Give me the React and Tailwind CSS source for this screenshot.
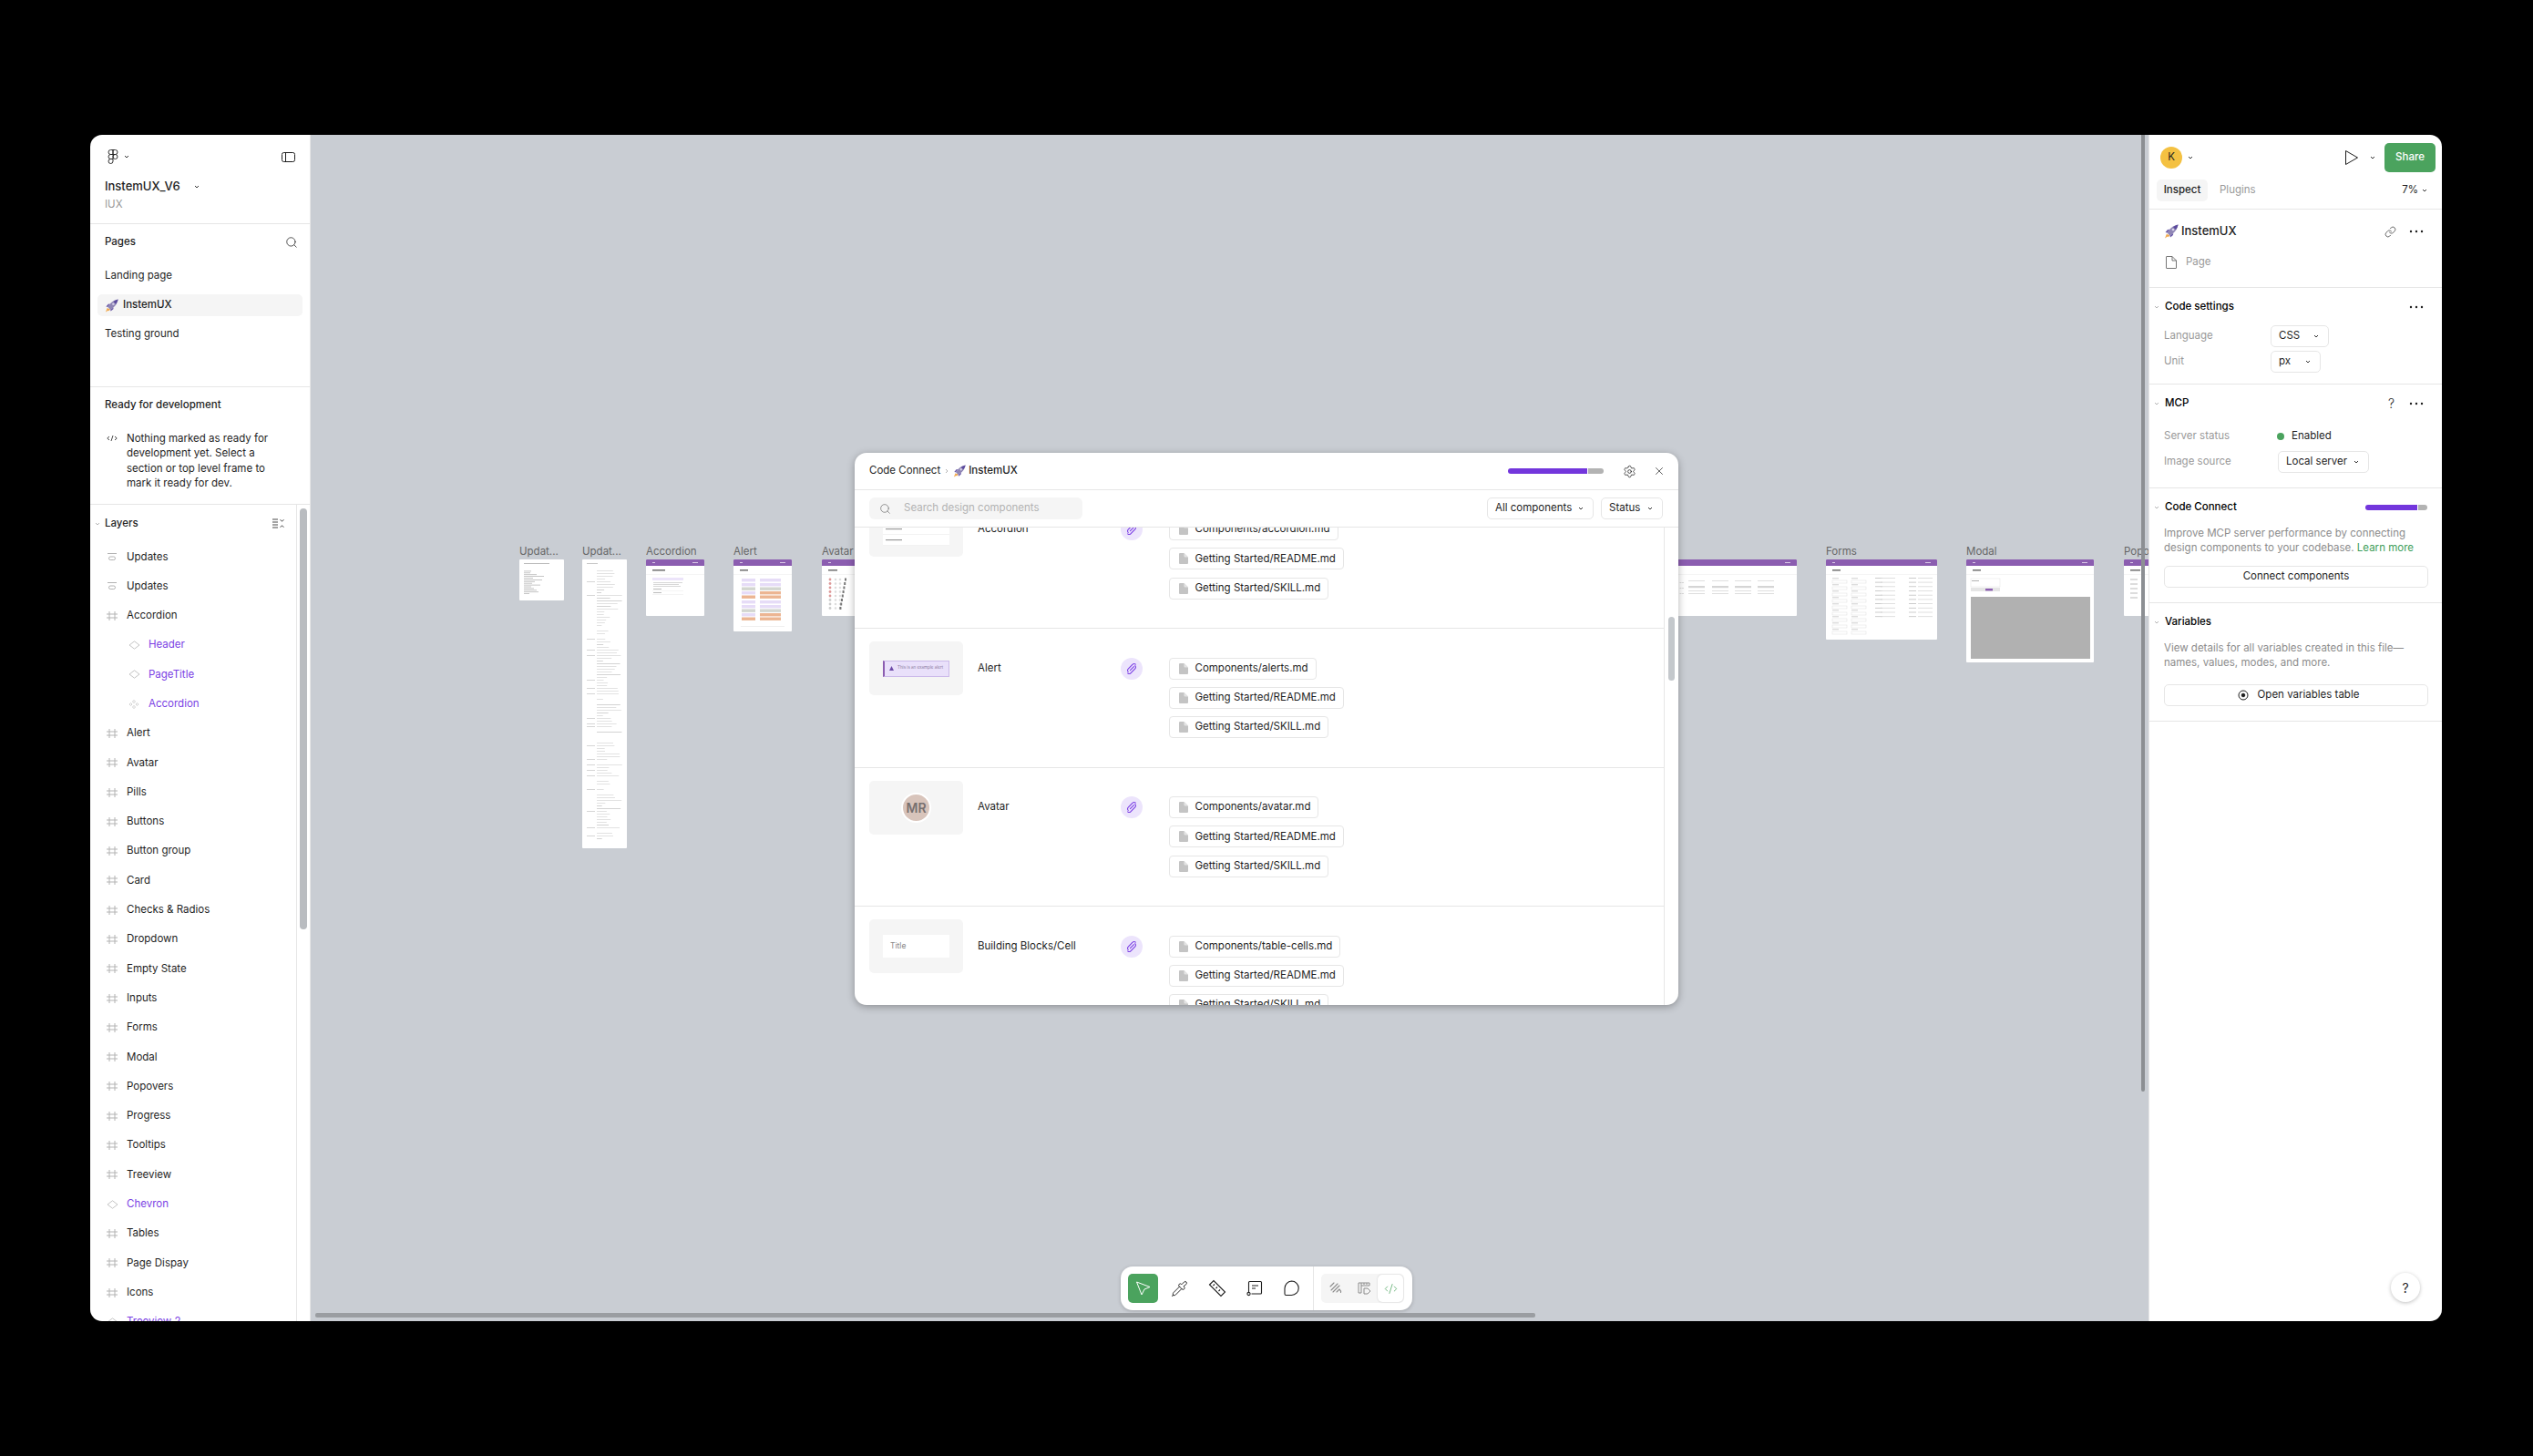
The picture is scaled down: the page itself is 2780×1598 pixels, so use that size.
import { CodeXml, Link, Pipette, Search, Settings, X } from 'lucide-react'

const Chev = ({ className = 'text-[#333]' }) => (
  <svg width="8" height="8" viewBox="0 0 8 8" fill="none" className={`shrink-0 ${className}`}>
    <path d="M2 3l2 2 2-2" stroke="currentColor" strokeWidth="1" />
  </svg>
)

const Dots = () => (
  <svg width="16" height="4" viewBox="0 0 16 4" className="mr-[4px] shrink-0 text-[#1e1e1e]">
    <circle cx="2" cy="2" r="1.2" fill="currentColor" />
    <circle cx="8" cy="2" r="1.2" fill="currentColor" />
    <circle cx="14" cy="2" r="1.2" fill="currentColor" />
  </svg>
)

const Rocket = ({ size = 15 }) => (
  <svg width={size} height={size} viewBox="0 0 16 16" className="shrink-0">
    <path d="M1 15.5l2-5 1.5 1.2L7 10.8l-2 3.4-1-.6z" fill="#f0a94e" />
    <path d="M3.5 9.5C6 5 10 1.5 15.5.5 14.8 6 11 10 6.5 12.5z" fill="#8f86b5" />
    <path d="M10 3.2C12 1.8 13.8 1 15.5.5 15.2 2.3 14.4 4 13 6z" fill="#5b4a9e" />
    <circle cx="10" cy="6" r="1.3" fill="#d9d5ea" />
    <path d="M3.5 9.5L1.5 9l2.5-3 2-.2zM6.5 12.5L7 14.5l3-2.5.2-2z" fill="#6a5aa8" />
  </svg>
)

const FigmaLogo = () => (
  <svg width="12" height="16" viewBox="0 0 12 16" fill="none" stroke="#1e1e1e" strokeWidth="0.9">
    <path d="M6 .5H3.5a2.5 2.5 0 0 0 0 5H6z" />
    <path d="M6 .5h2.5a2.5 2.5 0 0 1 0 5H6z" />
    <path d="M6 5.5H3.5a2.5 2.5 0 0 0 0 5H6z" />
    <circle cx="8.5" cy="8" r="2.5" />
    <path d="M3.5 10.5H6V13a2.5 2.5 0 1 1-2.5-2.5z" />
  </svg>
)

const LayerIcon = ({ kind }) => {
  if (kind === 'section') {
    return (
      <svg width="12" height="10" viewBox="0 0 12 10" fill="none" stroke="#b3b3b3">
        <path d="M1 1.5h10" />
        <rect x="2.5" y="5" width="7" height="3.5" rx="1.7" />
      </svg>
    )
  }
  if (kind === 'frame') {
    return (
      <svg width="12" height="10" viewBox="0 0 12 10" fill="none" stroke="#b3b3b3">
        <path d="M0 3h12M0 7h12M3 0v10M9 0v10" />
      </svg>
    )
  }
  if (kind === 'set') {
    return (
      <svg width="12" height="10" viewBox="0 0 12 10" fill="none" stroke="#c4c4c4" strokeWidth="0.8">
        <path d="M6 .5L7.6 2 6 3.5 4.4 2zM6 6.5L7.6 8 6 9.5 4.4 8zM2.5 3.5L4 5 2.5 6.5 1 5zM9.5 3.5L11 5 9.5 6.5 8 5z" />
      </svg>
    )
  }
  return (
    <svg width="13" height="10" viewBox="0 0 13 10" fill="none" stroke="#bdbdbd" strokeWidth="0.9">
      <path d="M6.5 .8L12 5 6.5 9.2 1 5z" />
    </svg>
  )
}

const layers = [
  ['Updates', 'section'],
  ['Updates', 'section'],
  ['Accordion', 'frame'],
  ['Header', 'comp', true],
  ['PageTitle', 'comp', true],
  ['Accordion', 'set', true],
  ['Alert', 'frame'],
  ['Avatar', 'frame'],
  ['Pills', 'frame'],
  ['Buttons', 'frame'],
  ['Button group', 'frame'],
  ['Card', 'frame'],
  ['Checks & Radios', 'frame'],
  ['Dropdown', 'frame'],
  ['Empty State', 'frame'],
  ['Inputs', 'frame'],
  ['Forms', 'frame'],
  ['Modal', 'frame'],
  ['Popovers', 'frame'],
  ['Progress', 'frame'],
  ['Tooltips', 'frame'],
  ['Treeview', 'frame'],
  ['Chevron', 'comp', false, true],
  ['Tables', 'frame'],
  ['Page Dispay', 'frame'],
  ['Icons', 'frame'],
  ['Treeview 2', 'comp', false, true],
]

const LeftPanel = () => (
  <aside className="flex w-[242px] shrink-0 flex-col border-r border-[#e6e6e6] bg-white">
    {/* File header */}
    <div className="h-[98px] shrink-0 border-b border-[#e6e6e6] pl-[16px] pr-[16px] pt-[12px]">
      <div className="flex h-[24px] items-center justify-between">
        <div className="flex items-center gap-[5px] pl-[3px]">
          <FigmaLogo />
          <Chev />
        </div>
        <svg width="15" height="11" viewBox="0 0 15 11" fill="none" stroke="#1e1e1e">
          <rect x="0.5" y="0.5" width="14" height="10" rx="2" />
          <path d="M4.5 .5v10" />
        </svg>
      </div>
      <div className="mt-[11px] flex h-[20px] items-center gap-[14px]">
        <span className="text-[13px] font-medium text-[#1e1e1e]">InstemUX_V6</span>
        <Chev />
      </div>
      <div className="flex h-[20px] items-center text-[11.5px] text-[#999]">IUX</div>
    </div>

    {/* Pages */}
    <div className="h-[179px] shrink-0 border-b border-[#e6e6e6]">
      <div className="flex h-[40px] items-center justify-between pl-[16px] pr-[13px]">
        <span className="text-[11.5px] font-medium text-[#1e1e1e]">Pages</span>
        <Search size={14} strokeWidth={1.3} className="text-[#1e1e1e]" />
      </div>
      <div className="mt-[5px] flex flex-col gap-[8px] px-[8px]">
        <div className="flex h-[24px] items-center pl-[8px] text-[11.5px] text-[#1e1e1e]">Landing page</div>
        <div className="flex h-[24px] items-center gap-[5px] rounded-[5px] bg-[#f5f5f5] pl-[8px] text-[11.5px] font-medium text-[#1e1e1e]">
          <Rocket />
          InstemUX
        </div>
        <div className="flex h-[24px] items-center pl-[8px] text-[11.5px] text-[#1e1e1e]">Testing ground</div>
      </div>
    </div>

    {/* Ready for development */}
    <div className="h-[129px] shrink-0 border-b border-[#e6e6e6]">
      <div className="flex h-[40px] items-center pl-[16px] text-[11.5px] font-medium text-[#1e1e1e]">Ready for development</div>
      <div className="mt-[8px] flex pl-[18px]">
        <svg width="12" height="16" viewBox="0 0 12 16" fill="none" stroke="#333" strokeWidth="0.9" className="shrink-0">
          <path d="M3 6L.8 8 3 10M9 6l2.2 2L9 10M7 5L5 11" />
        </svg>
        <p className="ml-[10px] w-[180px] text-[11.5px] leading-[16.3px] text-[#1e1e1e]">
          Nothing marked as ready for development yet. Select a section or top level frame to mark it ready for dev.
        </p>
      </div>
    </div>

    {/* Layers */}
    <div className="flex min-h-0 flex-1">
      <div className="min-w-0 flex-1 overflow-hidden">
        <div className="flex h-[41px] items-center pl-[4px] pr-[13px]">
          <Chev className="text-[#b3b3b3]" />
          <span className="ml-[4px] flex-1 text-[11.5px] font-medium text-[#1e1e1e]">Layers</span>
          <svg width="13" height="11" viewBox="0 0 13 11" fill="none" stroke="#333" strokeWidth="0.9">
            <path d="M0 1h6M0 4h6M0 7h6M0 10h6M8.5 1.5L10.5 3l2-1.5M8.5 9.5L10.5 8l2 1.5" />
          </svg>
        </div>
        {layers.map(([name, kind, child, purple], i) => (
          <div key={i} className="flex h-[32.3px] items-center text-[11.5px]">
            <div className={child ? 'flex w-[56px] justify-end' : 'flex w-[32px] justify-end'}>
              <div className="flex w-[16px] justify-center">
                <LayerIcon kind={kind} />
              </div>
            </div>
            <span className={child || purple ? 'ml-[8px] text-[#7b3fe4]' : 'ml-[8px] text-[#1e1e1e]'}>{name}</span>
          </div>
        ))}
      </div>
      <div className="w-[15px] shrink-0 border-l border-[#e6e6e6] pl-[3px] pt-[4px]">
        <div className="h-[462px] w-[8px] rounded-[4px] bg-[#b9bcc0]" />
      </div>
    </div>
  </aside>
)

const hash = (n) => {
  const v = Math.sin(n * 12.9898) * 43758.5453
  return v - Math.floor(v)
}

// tiny text of the long changelog frame, seen zoomed out
const ChangelogArt = () => {
  const lines = []
  for (let i = 0; i < 100; i++) {
    const y = 12 + i * 3
    const r = hash(i + 3)
    if (r < 0.14) continue
    if (r < 0.3) lines.push(<rect key={`a${i}`} x="5" y={y} width="9" height="0.7" fill="#c4c4c4" />)
    lines.push(<rect key={`b${i}`} x="16" y={y} width={5 + 23 * hash(i * 3 + 3)} height="0.7" fill={r > 0.8 ? '#c0c0c0' : '#d6d6d6'} />)
  }
  return (
    <svg width="49" height="317" viewBox="0 0 49 317" className="block">
      <rect x="5" y="4" width="12" height="0.8" fill="#bbb" />
      {lines}
    </svg>
  )
}

const UpdatesArt = () => (
  <svg width="49" height="45" viewBox="0 0 49 45" className="block">
    <rect x="5" y="4" width="28" height="0.8" fill="#aaa" />
    {[8, 7, 14, 22, 10, 20, 12, 9, 18, 8, 11, 14, 16, 6].map((w, i) => (
      <rect key={i} x="5" y={12.500 + i * 1.9} width={w} height="0.8" fill="#b8b8b8" />
    ))}
  </svg>
)

const AlertArt = () => {
  const cols = [
    [9, 15, ['#e6dcf7', '#e6dcf7', '#d3d6d0', '#e6dcf7', '#ecb592']],
    [29, 23, ['#e6dcf7', '#e6dcf7', '#d3d6d0', '#ecb592', '#ecb592']],
  ]
  const ys = [20, 25, 29.5, 34, 38.5, 44, 49, 53.5, 58, 62.5]
  return (
    <svg width="64" height="73" viewBox="0 0 64 73" className="block">
      <rect x="7" y="4" width="9" height="1.6" fill="#777" />
      <rect x="0" y="9" width="64" height="0.6" fill="#eee" />
      {cols.map(([x, w, c], ci) =>
        ys.map((y, i) => <rect key={`${ci}-${i}`} x={x} y={y - 6} width={w} height={3.4} fill={c[i % 5]} />)
      )}
      <rect x="8" y="66" width="48" height="0.6" fill="#e4e4e4" />
    </svg>
  )
}

const AccordionArt = () => (
  <svg width="64" height="56" viewBox="0 0 64 56" className="block">
    <rect x="7" y="4" width="14" height="1.6" fill="#777" />
    <rect x="0" y="9" width="64" height="0.6" fill="#eee" />
    <rect x="7" y="13" width="34" height="3" fill="#ece4fa" />
    <rect x="8" y="18" width="32" height="0.8" fill="#cfcfcf" />
    <rect x="8" y="20" width="28" height="0.8" fill="#cfcfcf" />
    <rect x="8" y="22" width="30" height="0.8" fill="#cfcfcf" />
    <rect x="8" y="25" width="9" height="0.8" fill="#aaa" />
    <rect x="8" y="29" width="9" height="0.8" fill="#aaa" />
    <rect x="7" y="27" width="34" height="0.5" fill="#e8e8e8" />
    <rect x="7" y="31" width="34" height="0.5" fill="#e8e8e8" />
  </svg>
)

const AvatarArt = () => (
  <svg width="64" height="56" viewBox="0 0 64 56" className="block">
    <rect x="7" y="4" width="10" height="1.6" fill="#777" />
    <rect x="0" y="9" width="64" height="0.6" fill="#eee" />
    {[0, 1, 2, 3, 4, 5, 6, 7].map((i) => (
      <g key={i}>
        <circle cx="9" cy={15 + i * 4.5} r="1.4" fill={i < 5 ? '#d99' : '#ccc'} />
        <circle cx="15" cy={15 + i * 4.5} r="1.3" fill="#ddd" />
        <circle cx="20" cy={15 + i * 4.5} r="1.3" fill="#ddd" />
        <rect x={25 - i * 0.8} y={13.5 + i * 4.5} width="2" height="3" fill="#777" />
      </g>
    ))}
  </svg>
)

const InputsArt = () => (
  <svg width="231" height="56" viewBox="0 0 231 56" className="block">
    <rect x="0" y="9" width="231" height="0.6" fill="#eee" />
    {[102.500, 105].map((x) =>
      [18, 24, 30].map((y) => <rect key={`${x}-${y}`} x={x} y={y} width="2" height="1" fill="#ddd" />)
    )}
    {[112, 138, 163, 188].map((x) =>
      [16, 22, 27, 30].map((y, i) => (
        <rect key={`${x}-${i}`} x={x} y={y} width="18" height={i === 1 ? 2.2 : 0.7} fill={i === 1 ? '#d5d5d5' : '#d0d0d0'} />
      ))
    )}
  </svg>
)

const FormsArt = () => {
  const rows = []
  for (let i = 0; i < 9; i++) {
    ;[7, 28].forEach((x) => {
      rows.push(<rect key={`l${x}${i}`} x={x} y={16 + i * 7} width="16" height="3" fill="none" stroke="#ddd" strokeWidth="0.5" />)
      rows.push(<rect key={`m${x}${i}`} x={x} y={13.5 + i * 7} width="7" height="0.7" fill="#bbb" />)
    })
  }
  for (let i = 0; i < 10; i++) {
    ;[54, 60, 88, 98].forEach((x, j) => {
      rows.push(<rect key={`r${j}${i}`} x={x + (j > 1 ? 3 : 0)} y={13 + i * 4.7} width={j % 2 ? 16 : 8} height="0.8" fill={j % 2 ? '#d8d8d8' : '#c0c0c0'} />)
    })
  }
  return (
    <svg width="122" height="82" viewBox="0 0 122 82" className="block">
      <rect x="7" y="4" width="9" height="1.6" fill="#777" />
      <rect x="0" y="9" width="122" height="0.6" fill="#eee" />
      {rows}
    </svg>
  )
}

const ModalArt = () => (
  <svg width="140" height="107" viewBox="0 0 140 107" className="block">
    <rect x="7" y="4" width="9" height="1.6" fill="#777" />
    <rect x="0" y="9" width="140" height="0.6" fill="#eee" />
    <rect x="5" y="14" width="32" height="9" fill="none" stroke="#e2e2e2" strokeWidth="0.5" />
    <rect x="6" y="16" width="8" height="0.9" fill="#aaa" />
    <rect x="5" y="24" width="32" height="4" fill="#e5e5e5" />
    <rect x="21" y="25" width="8" height="2.4" fill="#8b5db0" />
    <rect x="5" y="34" width="131" height="68" fill="#b1b1b1" />
  </svg>
)

const PopoverArt = () => (
  <svg width="64" height="56" viewBox="0 0 64 56" className="block">
    <rect x="7" y="4" width="11" height="1.6" fill="#777" />
    <rect x="0" y="9" width="64" height="0.6" fill="#eee" />
    {[0, 1, 2, 3, 4].map((i) => (
      <rect key={i} x="7" y={14 + i * 5} width="8" height="2" fill="#ddd" />
    ))}
  </svg>
)

const Frame = ({ label, className, top, children }) => (
  <div className={`absolute top-[466px] ${className}`}>
    <div className="absolute -top-[16px] left-0 whitespace-nowrap text-[11.5px] leading-[14px] text-[#666]">{label}</div>
    <div className="h-full w-full overflow-hidden rounded-[1px] bg-white">
      {top && (
        <div className="flex h-[6.5px] items-center justify-between bg-[#8b5db0] px-[7px]">
          <div className="h-[1.5px] w-[3px] bg-[#d9c8e6]" />
          <div className="h-[1px] w-[6px] bg-[#d9c8e6]" />
        </div>
      )}
      {children}
    </div>
  </div>
)

const ClipIcon = ({ size = 16 }) => (
  <svg width={size} height={size} viewBox="0 0 16 16" fill="none" stroke="#7b3fe4" strokeWidth="1.1" strokeLinecap="round">
    <path d="M12.3 3.2a2.2 2.2 0 0 0-3.2 0L4.2 8.1a2.2 2.2 0 0 0 0 3.2" />
    <path d="M3.7 12.8a2.2 2.2 0 0 0 3.2 0l4.9-4.9a2.2 2.2 0 0 0 0-3.2" />
    <path d="M10.4 5.7L6.4 9.6" />
  </svg>
)

const DocIcon = () => (
  <svg width="10" height="12" viewBox="0 0 10 12" className="shrink-0">
    <path d="M0 1a1 1 0 0 1 1-1h4.5L10 4.5V11a1 1 0 0 1-1 1H1a1 1 0 0 1-1-1z" fill="#c4c4c4" />
    <path d="M5.5 0L10 4.5H6.5a1 1 0 0 1-1-1z" fill="#e4e4e4" />
  </svg>
)

const Chip = ({ children }) => (
  <div className="flex h-[24px] w-fit items-center gap-[7.5px] rounded-[4px] border border-[#e6e6e6] bg-white pl-[10px] pr-[8px] text-[11.5px] text-[#1e1e1e]">
    <DocIcon />
    {children}
  </div>
)

const ThumbAccordion = () => (
  <div className="flex h-full items-end justify-center pb-[12px]">
    <svg width="73" height="40" viewBox="0 0 73 40">
      <rect x="0" y="0" width="73" height="40" fill="#fff" />
      <rect x="2" y="14" width="69" height="0.5" fill="#e4e4e4" />
      <rect x="2" y="4" width="50" height="1" fill="#ccc" />
      <rect x="2" y="8" width="40" height="1" fill="#ccc" />
      <rect x="3" y="21" width="18" height="1.2" fill="#999" />
      <rect x="3" y="33" width="18" height="1.2" fill="#999" />
      <rect x="0" y="27" width="73" height="0.5" fill="#e4e4e4" />
      <rect x="0" y="39" width="73" height="0.5" fill="#e4e4e4" />
    </svg>
  </div>
)

const ThumbAlert = () => (
  <div className="flex h-full items-center justify-center">
    <div className="flex h-[18px] w-[73px] items-center gap-[4px] border border-l-2 border-[#cbb9ea] border-l-[#8b5db0] bg-[#e9e0fa] pl-[5px]">
      <svg width="5" height="5" viewBox="0 0 5 5">
        <path d="M2.5 0L5 5H0z" fill="#6d4aa8" />
      </svg>
      <div className="whitespace-nowrap text-[4.5px] leading-none text-[#8a7a9e]">This is an example alert</div>
    </div>
  </div>
)

const ThumbAvatar = () => (
  <div className="flex h-full items-center justify-center">
    <div className="flex h-[33px] w-[33px] items-center justify-center rounded-full border-2 border-white bg-[#d8c4bb] text-[14px] font-semibold text-[#787070]">
      MR
    </div>
  </div>
)

const ThumbCell = () => (
  <div className="flex h-full items-center justify-center">
    <div className="flex h-[25px] w-[73px] items-center bg-white pl-[8px] text-[8.5px] text-[#888]">Title</div>
  </div>
)

const rows = [
  { name: 'Accordion', thumb: <ThumbAccordion />, first: 'Components/accordion.md' },
  { name: 'Alert', thumb: <ThumbAlert />, first: 'Components/alerts.md' },
  { name: 'Avatar', thumb: <ThumbAvatar />, first: 'Components/avatar.md' },
  { name: 'Building Blocks/Cell', thumb: <ThumbCell />, first: 'Components/table-cells.md' },
]

const ConnectModal = () => (
  <div className="absolute left-[597px] top-[349px] flex h-[606px] w-[904px] flex-col overflow-hidden rounded-[13px] bg-white shadow-[0_2px_8px_rgba(0,0,0,0.3)]">
    <div className="flex h-[41px] shrink-0 items-center border-b border-[#e6e6e6] pl-[16px] pr-[14px]">
      <span className="text-[11.5px] text-[#1e1e1e]">Code Connect</span>
      <svg width="8" height="8" viewBox="0 0 8 8" fill="none" stroke="#b3b3b3" className="mx-[3px]">
        <path d="M3 2l2 2-2 2" />
      </svg>
      <Rocket size={14} />
      <span className="ml-[3px] text-[11.5px] font-medium text-[#1e1e1e]">InstemUX</span>
      <div className="ml-auto flex h-[6px] w-[105px] gap-[1px]">
        <div className="w-[87px] rounded-l-[3px] bg-[#7336dc]" />
        <div className="flex-1 rounded-r-[3px] bg-[#b3b3b3]" />
      </div>
      <Settings size={15} strokeWidth={1.2} className="ml-[21px] text-[#1e1e1e]" />
      <X size={14} strokeWidth={1.2} className="ml-[18px] text-[#1e1e1e]" />
    </div>
    <div className="flex h-[41px] shrink-0 items-center border-b border-[#e6e6e6] pl-[16px] pr-[17px]">
      <div className="flex h-[24px] w-[234px] items-center rounded-[6px] bg-[#f5f5f5] pl-[11px] text-[11.5px] text-[#b3b3b3]">
        <Search size={13} strokeWidth={1.2} className="text-[#666]" />
        <span className="ml-[14px]">Search design components</span>
      </div>
      <div className="ml-auto flex h-[24px] w-[117px] items-center justify-between rounded-[5px] border border-[#e6e6e6] pl-[8px] pr-[9px] text-[11.5px] text-[#1e1e1e]">
        All components
        <Chev />
      </div>
      <div className="ml-[8px] flex h-[24px] w-[68px] items-center justify-between rounded-[5px] border border-[#e6e6e6] pl-[8px] pr-[9px] text-[11.5px] text-[#1e1e1e]">
        Status
        <Chev />
      </div>
    </div>
    <div className="flex min-h-0 flex-1">
      <div className="min-w-0 flex-1 overflow-hidden">
        <div className="-mt-[41.5px]">
          {rows.map((row) => (
            <div key={row.name} className="flex h-[152.5px] border-b border-[#e6e6e6] pl-[16px] pt-[14px]">
              <div className="h-[59px] w-[103px] shrink-0 rounded-[5px] bg-[#f5f5f5]">{row.thumb}</div>
              <div className="ml-[16px] flex h-[59px] w-[157px] shrink-0 items-center text-[11.5px] text-[#1e1e1e]">{row.name}</div>
              <div className="flex h-[59px] w-[24px] shrink-0 items-center">
                <div className="flex h-[24px] w-[24px] items-center justify-center rounded-full bg-[#ece4fc]">
                  <ClipIcon />
                </div>
              </div>
              <div className="ml-[29px] flex flex-col gap-[8.3px] pt-[17.5px]">
                <Chip>{row.first}</Chip>
                <Chip>Getting Started/README.md</Chip>
                <Chip>Getting Started/SKILL.md</Chip>
              </div>
            </div>
          ))}
        </div>
      </div>
      <div className="w-[16px] shrink-0 border-l border-[#e6e6e6] pl-[4px] pt-[98px]">
        <div className="h-[70px] w-[7px] rounded-[4px] bg-[#c4c8cc]" />
      </div>
    </div>
  </div>
)

const Toolbar = () => (
  <div className="absolute left-[889px] top-[1242px] flex h-[48px] w-[320px] items-center rounded-[13px] bg-white pl-[8px] shadow-[0_1px_4px_rgba(0,0,0,0.2)]">
    <div className="flex h-[32px] w-[33px] items-center justify-center rounded-[5px] bg-[#4ba35e]">
      <svg width="20" height="20" viewBox="0 0 20 20" fill="none" stroke="#fff" strokeWidth="1" strokeLinejoin="round">
        <path d="M2.5 3L17 8.5l-6 2.5-3 6z" />
      </svg>
    </div>
    <div className="ml-[3px] flex w-[41px] justify-center">
      <Pipette size={19} strokeWidth={1.2} className="text-[#1e1e1e]" />
    </div>
    <div className="flex w-[41px] justify-center">
      <svg width="20" height="20" viewBox="0 0 20 20" fill="none" stroke="#1e1e1e" strokeWidth="1.1">
        <path d="M1.5 6L6 1.5 18.5 14 14 18.5zM5.5 7L7 5.5M8.5 10L10 8.5M11.5 13L13 11.5" />
      </svg>
    </div>
    <div className="flex w-[41px] justify-center">
      <svg width="20" height="20" viewBox="0 0 20 20" fill="none" stroke="#1e1e1e" strokeWidth="1.1">
        <path d="M3.5 14V3.5a1 1 0 0 1 1-1h12a1 1 0 0 1 1 1V15a1 1 0 0 1-1 1h-10" />
        <circle cx="3.5" cy="16" r="1.6" />
        <path d="M7 7h7M7 10h4" />
      </svg>
    </div>
    <div className="flex w-[40px] justify-center">
      <svg width="20" height="20" viewBox="0 0 20 20" fill="none" stroke="#1e1e1e" strokeWidth="1.1">
        <path d="M10.5 2a7.5 7.5 0 0 1 0 15.5H4.5a1.5 1.5 0 0 1-1.5-1.5V10a8 8 0 0 1 7.5-8z" />
      </svg>
    </div>
    <div className="ml-[4px] h-[48px] w-px bg-[#e6e6e6]" />
    <div className="ml-[8px] flex h-[32px] w-[91px] items-center rounded-[5px] bg-[#f5f5f5]">
      <div className="flex w-[31px] justify-center">
        <svg width="16" height="16" viewBox="0 0 16 16" fill="none" stroke="#8c8c8c" strokeWidth="1.1" strokeLinecap="round">
          <path d="M2 6l4-4M3 10l7-7M5 12l7-7M9 12l3-3M12 9c1 1 2 2.500 1.500 3.500" />
        </svg>
      </div>
      <div className="flex w-[31px] justify-center">
        <svg width="16" height="16" viewBox="0 0 16 16" fill="none" stroke="#8c8c8c" strokeWidth="1">
          <path d="M2 13V2h12v3H5v8zM5 2v3M8 2v2M11 2v2" />
          <path d="M8 8h4l3 3-3 3H8z" />
        </svg>
      </div>
      <div className="flex h-[30px] w-[28px] items-center justify-center rounded-[5px] bg-white shadow-[0_0_2px_rgba(0,0,0,0.2)]">
        <CodeXml size={15} strokeWidth={1.2} className="text-[#4ba35e]" />
      </div>
    </div>
  </div>
)

const Canvas = () => (
  <main className="relative min-w-0 flex-1 overflow-hidden bg-[#c9cdd3]">
    <Frame label="Updat..." className="left-[229px] h-[45px] w-[49px]">
      <UpdatesArt />
    </Frame>
    <Frame label="Updat..." className="left-[298px] h-[317px] w-[49px]">
      <ChangelogArt />
    </Frame>
    <Frame label="Accordion" top className="left-[368px] h-[62px] w-[64px]">
      <AccordionArt />
    </Frame>
    <Frame label="Alert" top className="left-[464px] h-[79px] w-[64px]">
      <AlertArt />
    </Frame>
    <Frame label="Avatar" top className="left-[561px] h-[62px] w-[64px]">
      <AvatarArt />
    </Frame>
    <Frame top className="left-[1400px] h-[62px] w-[231px]">
      <InputsArt />
    </Frame>
    <Frame label="Forms" top className="left-[1663px] h-[88px] w-[122px]">
      <FormsArt />
    </Frame>
    <Frame label="Modal" top className="left-[1817px] h-[113px] w-[140px]">
      <ModalArt />
    </Frame>
    <Frame label="Popovers" top className="left-[1990px] h-[62px] w-[64px]">
      <PopoverArt />
    </Frame>

    <ConnectModal />
    <Toolbar />

    {/* canvas scrollbars */}
    <div className="absolute left-[2009px] top-0 h-[1050px] w-[4px] rounded-b-[2px] bg-[#8c8f93]" />
    <div className="absolute bottom-[4px] left-[5px] h-[5px] w-[1339px] rounded-[2px] bg-[#9a9da1]" />
  </main>
)

const Section = ({ title, right, className, children }) => (
  <section className={`shrink-0 border-b border-[#e6e6e6] ${className}`}>
    <div className="flex h-[41px] items-center pl-[4px] pr-[16px]">
      <Chev className="text-[#b3b3b3]" />
      <span className="ml-[5px] flex-1 text-[11.5px] font-medium text-black">{title}</span>
      {right}
    </div>
    {children}
  </section>
)

const Select = ({ className, children }) => (
  <div className={`flex h-[24px] items-center justify-between rounded-[5px] border border-[#e6e6e6] pl-[8px] pr-[9px] text-[11.5px] text-[#1e1e1e] ${className}`}>
    {children}
    <Chev />
  </div>
)

const RightPanel = () => (
  <aside className="relative flex w-[322px] shrink-0 flex-col border-l border-[#e6e6e6] bg-white">
    <div className="flex h-[82px] shrink-0 flex-col border-b border-[#e6e6e6] pl-[8px] pr-[7px]">
      <div className="mt-[9px] flex h-[32px] shrink-0 items-center">
        <div className="ml-[4px] flex h-[24px] w-[24px] items-center justify-center rounded-full bg-[#f4c142] text-[11.5px] text-[#1e1e1e]">K</div>
        <Chev className="ml-[5px] text-[#333]" />
        <svg width="16" height="18" viewBox="0 0 16 18" fill="none" stroke="#1e1e1e" className="ml-auto">
          <path d="M1.5 1.500L14.500 9 1.500 16.500z" strokeLinejoin="round" />
        </svg>
        <Chev className="ml-[11px] text-[#333]" />
        <div className="ml-[9px] flex h-[32px] w-[56px] items-center justify-center rounded-[5px] bg-[#4ba35e] text-[11.5px] font-medium text-white">Share</div>
      </div>
      <div className="mt-[8px] flex items-center">
        <div className="flex h-[24px] w-[56px] items-center justify-center rounded-[5px] bg-[#f5f5f5] text-[11.5px] font-medium text-[#1e1e1e]">Inspect</div>
        <span className="ml-[13px] text-[11.5px] text-[#999]">Plugins</span>
        <span className="ml-auto text-[11.5px] text-[#1e1e1e]">7%</span>
        <Chev className="ml-[3px] mr-[8px] text-[#333]" />
      </div>
    </div>

    <div className="h-[86px] shrink-0 border-b border-[#e6e6e6] pl-[16px] pr-[16px]">
      <div className="flex h-[48px] items-center">
        <Rocket size={16} />
        <span className="ml-[3px] flex-1 text-[13px] font-medium text-[#1e1e1e]">InstemUX</span>
        <Link size={13} strokeWidth={1.2} className="mr-[14px] text-[#1e1e1e]" />
        <Dots />
      </div>
      <div className="mt-[1px] flex items-center text-[11.5px] text-[#999]">
        <svg width="12" height="14" viewBox="0 0 12 14" fill="none" stroke="#666" strokeWidth="0.9" className="ml-[2px]">
          <path d="M.5 1a.5.5 0 0 1 .5-.5h6l4.500 4.500V13a.5.5 0 0 1-.5.5H1a.5.5 0 0 1-.5-.5zM7 .5V5h4.500" />
        </svg>
        <span className="ml-[10px]">Page</span>
      </div>
    </div>

    <Section title="Code settings" right={<Dots />} className="h-[106px]">
      <div className="flex h-[24px] items-center pl-[16px] text-[11.5px] text-[#999]">
        <span className="w-[117px]">Language</span>
        <Select className="w-[64px]">CSS</Select>
      </div>
      <div className="mt-[4px] flex h-[24px] items-center pl-[16px] text-[11.5px] text-[#999]">
        <span className="w-[117px]">Unit</span>
        <Select className="w-[55px]">px</Select>
      </div>
    </Section>

    <Section
      title="MCP"
      right={
        <>
          <span className="mr-[16px] text-[14px] font-light text-[#1e1e1e]">?</span>
          <Dots />
        </>
      }
      className="h-[114px]"
    >
      <div className="mt-[4px] flex h-[24px] items-center pl-[16px] text-[11.5px] text-[#999]">
        <span className="w-[125px]">Server status</span>
        <div className="-ml-[1px] h-[8px] w-[8px] rounded-full bg-[#4ba35e]" />
        <span className="ml-[8px] text-[#1e1e1e]">Enabled</span>
      </div>
      <div className="mt-[4px] flex h-[24px] items-center pl-[16px] text-[11.5px] text-[#999]">
        <span className="w-[125px]">Image source</span>
        <Select className="w-[100px]">Local server</Select>
      </div>
    </Section>

    <Section
      title="Code Connect"
      right={
        <div className="flex h-[6px] w-[68px] gap-[1px]">
          <div className="w-[57px] rounded-l-[3px] bg-[#7336dc]" />
          <div className="flex-1 rounded-r-[3px] bg-[#b3b3b3]" />
        </div>
      }
      className="h-[126px]"
    >
      <p className="pl-[16px] text-[11.5px] leading-[16px] text-[#8c8c8c]">
        Improve MCP server performance by connecting
        <br />
        design components to your codebase. <span className="text-[#3f9e5a]">Learn more</span>
      </p>
      <div className="ml-[16px] mr-[15px] mt-[12px] flex h-[24px] items-center justify-center rounded-[5px] border border-[#e6e6e6] text-[11.5px] text-[#1e1e1e]">Connect components</div>
    </Section>

    <Section title="Variables" className="h-[130px]">
      <p className="pl-[16px] text-[11.5px] leading-[16px] text-[#8c8c8c]">
        View details for all variables created in this file—
        <br />
        names, values, modes, and more.
      </p>
      <div className="ml-[16px] mr-[15px] mt-[16px] flex h-[24px] items-center justify-center gap-[10px] rounded-[5px] border border-[#e6e6e6] pl-[5px] text-[11.5px] text-[#1e1e1e]">
        <svg width="12" height="12" viewBox="0 0 12 12" fill="none" stroke="#1e1e1e">
          <circle cx="6" cy="6" r="5" />
          <circle cx="6" cy="6" r="1.8" fill="#1e1e1e" />
        </svg>
        Open variables table
      </div>
    </Section>

    <div className="absolute bottom-[21px] right-[24px] flex h-[32px] w-[32px] items-center justify-center rounded-full bg-white text-[14px] text-[#1e1e1e] shadow-[0_1px_4px_rgba(0,0,0,0.25)]">?</div>
  </aside>
)

export default function App() {
  return (
    <div className="h-[1598px] w-[2780px] overflow-hidden bg-black pl-[99px] pt-[148px] font-['Inter',sans-serif]">
      <div className="flex h-[1302px] w-[2581px] overflow-hidden rounded-[13px]">
        <LeftPanel />
        <Canvas />
        <RightPanel />
      </div>
    </div>
  )
}
